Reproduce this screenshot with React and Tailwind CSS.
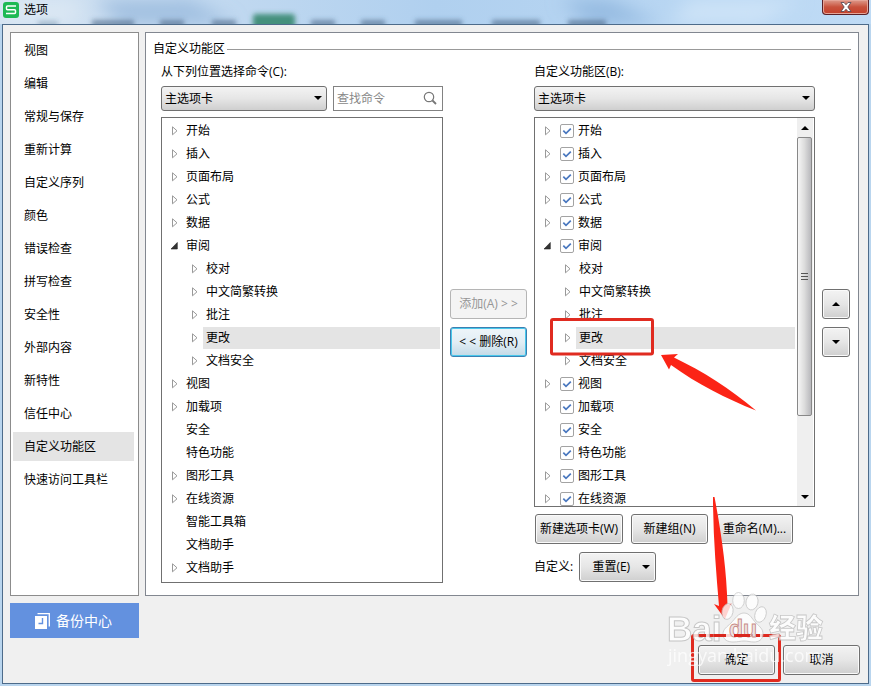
import { useState } from 'react';

const NAV = ['视图', '编辑', '常规与保存', '重新计算', '自定义序列', '颜色', '错误检查', '拼写检查', '安全性', '外部内容', '新特性', '信任中心', '自定义功能区', '快速访问工具栏'];

const REVIEW = ['校对', '中文简繁转换', '批注', '更改', '文档安全'];

const TABS = [
  { name: '开始', arrow: 'closed' },
  { name: '插入', arrow: 'closed' },
  { name: '页面布局', arrow: 'closed' },
  { name: '公式', arrow: 'closed' },
  { name: '数据', arrow: 'closed' },
  { name: '审阅', arrow: 'open' },
  ...REVIEW.map((name) => ({ name, arrow: 'closed', child: true })),
  { name: '视图', arrow: 'closed' },
  { name: '加载项', arrow: 'closed' },
  { name: '安全' },
  { name: '特色功能' },
  { name: '图形工具', arrow: 'closed' },
  { name: '在线资源', arrow: 'closed' },
];

const COMMANDS = [
  ...TABS,
  { name: '智能工具箱' },
  { name: '文档助手' },
  { name: '文档助手', arrow: 'closed' },
];

const BUTTON = 'h-[30px] rounded-[3px] border border-[#707070] bg-linear-to-b from-[#f3f3f3] from-0% via-[#e6e6e6] via-50% to-[#cfcfcf] to-100% text-center whitespace-nowrap shadow-[inset_0_0_0_1px_#fafafa]';
const SELECT = 'w-full h-full appearance-none rounded-[3px] border border-[#707070] bg-linear-to-b from-[#f3f3f3] via-[#e6e6e6] to-[#cfcfcf] pl-[3px] pr-5 outline-none';

function Caret({ up, className = '' }) {
  return (
    <svg viewBox="0 0 8 4" className={`h-1 w-2 ${className}`} aria-hidden="true">
      <path d={up ? 'M0 4 4 0l4 4z' : 'M0 0h8L4 4z'} fill="#000" />
    </svg>
  );
}

function Arrow({ state }) {
  return (
    <svg viewBox="0 0 12 12" className="h-3 w-3 shrink-0" aria-hidden="true">
      {state === 'closed' && <path d="M4.5 1.8v8L9 5.800z" fill="#fff" stroke="#999" />}
      {state === 'open' && <path d="M9.300 2.500v6.500H3z" fill="#333" stroke="#222" strokeWidth="0.600" />}
    </svg>
  );
}

function Dropdown({ id, className }) {
  return (
    <div className={`relative h-[25px] ${className}`}>
      <select id={id} className={SELECT}>
        <option>主选项卡</option>
      </select>
      <Caret className="pointer-events-none absolute top-[10px] right-[5px]" />
    </div>
  );
}

function Check({ name }) {
  return (
    <span className="relative ml-[7px] mr-px h-[14px] w-[14px] shrink-0">
      <input type="checkbox" defaultChecked aria-label={name} className="peer block h-full w-full appearance-none rounded-[2px] border border-[#a3a3a3] bg-white" />
      <svg viewBox="0 0 14 14" className="pointer-events-none absolute inset-0 hidden peer-checked:block" aria-hidden="true">
        <path d="M3.3 6.700 6 9.400l4.800-4.800" fill="none" stroke="#4a78bf" strokeWidth="1.700" />
      </svg>
    </span>
  );
}

function Tree({ label, items, checks }) {
  const [selected, setSelected] = useState(9);
  return (
    <ul role="tree" aria-label={label} className="min-w-0 flex-1 pt-px pr-[2px] pb-[3px]">
      {items.map((item, i) => (
        <li
          key={i}
          role="treeitem"
          aria-selected={selected === i}
          onClick={() => setSelected(i)}
          className={`flex h-[23px] items-center ${item.child ? 'pl-[26px]' : 'pl-[6px]'}`}
        >
          <Arrow state={item.arrow} />
          {checks && !item.child && <Check name={item.name} />}
          <span className={`h-[22px] flex-1 px-[3px] leading-[22px] ${checks && !item.child ? '' : 'ml-[3px]'} ${selected === i ? 'bg-[#e4e4e4]' : ''}`}>
            {item.name}
          </span>
        </li>
      ))}
    </ul>
  );
}

function ScrollBar() {
  return (
    <div className="mr-px flex w-4 shrink-0 flex-col bg-[#efefef]" aria-hidden="true">
      <div className="flex h-[19px] items-center justify-center"><Caret up /></div>
      <div className="flex h-[279px] w-[15px] flex-col items-center justify-center gap-[2px] rounded-[2px] border border-[#888] bg-linear-to-r from-[#f6f6f6] via-[#dcdcdc] to-[#b8b8bc]">
        <i className="h-px w-[7px] bg-[#555]" />
        <i className="h-px w-[7px] bg-[#555]" />
        <i className="h-px w-[7px] bg-[#555]" />
      </div>
      <div className="flex-1" />
      <div className="flex h-[19px] items-center justify-center"><Caret /></div>
    </div>
  );
}

function TitleBar() {
  const words = [[92, 42], [160, 24], [212, 24], [311, 24], [361, 24], [415, 47], [492, 48], [568, 38]];
  return (
    <header className="relative flex h-6 items-start overflow-hidden bg-linear-to-r from-[#d3e2f1] via-[#b0d0ef] to-[#bfdbf5]">
      <svg className="absolute inset-0 h-full w-full" aria-hidden="true">
        <defs>
          <filter id="haze" x="-20%" y="-100%" width="140%" height="300%"><feGaussianBlur stdDeviation="2.800" /></filter>
          <filter id="cloud" x="-50%" y="-100%" width="200%" height="300%"><feGaussianBlur stdDeviation="9" /></filter>
        </defs>
        <g filter="url(#cloud)">
          <path d="M95 0h95l45 24H120z" fill="#8fb2d8" opacity="0.7" />
          <path d="M560 0h50l50 24H590z" fill="#8cb3dc" opacity="0.8" />
          <path d="M0 0h80v24H0z" fill="#e3ecf5" opacity="0.6" />
          <path d="M690 0h110l-40 24h-90z" fill="#d5e8fa" opacity="0.7" />
        </g>
        <g filter="url(#haze)">
          {words.map(([x, w]) => <rect key={x} x={x} y="20" width={w} height="7" fill="#3d5876" opacity="0.55" />)}
          <rect x="38" y="21" width="20" height="6" fill="#3d5876" opacity="0.3" />
          <rect x="253" y="14" width="42" height="16" rx="3" fill="#2f8468" opacity="0.85" />
        </g>
      </svg>
      <svg viewBox="0 0 16 16" className="relative mt-[2px] ml-[3px] h-4 w-4" aria-hidden="true">
        <rect width="16" height="16" rx="3" fill="#1db954" />
        <path d="M13 4H4.500a1 1 0 0 0-1 1v1.800a1 1 0 0 0 1 1h7a1 1 0 0 1 1 1v1.800a1 1 0 0 1-1 1H3" fill="none" stroke="#fff" strokeWidth="1.500" />
      </svg>
      <h1 className="relative ml-[5px] leading-5">选项</h1>
      <button aria-label="关闭" className="relative mr-[2px] ml-auto flex h-[15px] w-[47px] items-center justify-center rounded-b-[4px] border border-t-0 border-[#5a2027] bg-linear-to-b from-[#dd9a8c] via-[#c8513c] to-[#c4402a] shadow-[inset_0_0_0_1px_#e5a598]">
        <svg viewBox="0 0 12 10" className="h-[10px] w-3" aria-hidden="true">
          <path d="M1 .5h3l2 2.300L8 .5h3L7.800 5 11 9.500H8L6 7.200 4 9.500H1L4.200 5z" fill="#fff" stroke="#4d4552" strokeWidth="0.800" />
        </svg>
      </button>
    </header>
  );
}

function Annotations() {
  return (
    <svg viewBox="0 0 871 686" className="pointer-events-none absolute top-0 left-0 h-[686px] w-[871px]" aria-hidden="true">
      <g fill="none" stroke="#e02b20" strokeWidth="3">
        <rect x="551.5" y="319.500" width="101" height="34.500" rx="1.500" />
        <rect x="692.500" y="635.500" width="87" height="45" rx="1.500" />
      </g>
      <g fill="#fb2416">
        <path d="M661 355l17-1-4 3.500c29 14 56 31 82 53-30-12-58-26-85-45.500l-2 4.500z" />
        <path d="M713 497h1.500c7 37 12 72 13 108l4-1.500-6.500 15.500-11-15 5 2c-3-35-6-72-6-109z" />
      </g>
      <g fill="#fff" stroke="#bcbcbc" strokeWidth="0.800" opacity="0.800">
        <ellipse cx="738.500" cy="600.500" rx="5.800" ry="8" />
        <ellipse cx="752" cy="602" rx="6" ry="8" transform="rotate(12 752 602)" />
        <ellipse cx="727.500" cy="611.500" rx="5.500" ry="8" transform="rotate(12 727.5 611.5)" />
        <ellipse cx="760.500" cy="614.500" rx="5.500" ry="8" transform="rotate(20 760.5 614.5)" />
        <path d="M744 613c6 0 8 6 12 10s7 6 7 11c0 6-5 8-9 8-4 0-6-1-10-1s-6 1-11 1-10-2-10-8c0-5 4-7 8-11s7-10 13-10z" />
        <text x="667" y="641" strokeWidth="1" className="font-['Liberation_Sans'] text-[35px] font-bold">Bai</text>
        <text x="769" y="638" className="font-['Noto_Sans_CJK_SC'] text-[27px] font-black">经验</text>
      </g>
      <text x="668" y="662" fill="#fff" opacity="0.750" className="font-['Open_Sans'] text-[18px]">jingyan.baidu.com</text>
      <text x="729" y="637" fill="#eee3e2" stroke="#c98d88" strokeWidth="0.900" className="font-['Liberation_Sans'] text-[23px] font-bold">du</text>
      <path d="M700 635.500h6m8 0h12m8 0h16m6 0h4" stroke="#d9271d" strokeWidth="3" />
    </svg>
  );
}

export default function App() {
  const [page, setPage] = useState('自定义功能区');
  return (
    <div className="relative flex min-h-screen flex-col bg-[#b9d5ee] font-['Open_Sans','Noto_Sans_CJK_SC',sans-serif] text-[12px] leading-4 text-black">
      <TitleBar />
      <div className="mr-[2px] mb-[2px] ml-[2px] flex flex-1 flex-col border border-[#4d6b8a] bg-[#f0f0f0] px-[7px] pt-[7px]">
        <div className="flex gap-[6px]">
          <nav className="flex w-[129px] shrink-0 flex-col gap-1 border border-[#8c8c8c] bg-white pt-[3px] pr-1 pl-[2px]">
            {NAV.map((name) => (
              <button key={name} onClick={() => setPage(name)} className={`h-[29px] shrink-0 pl-[11px] text-left ${page === name ? 'bg-[#e4e4e4]' : ''}`}>
                {name}
              </button>
            ))}
          </nav>
          <main className="mr-[2px] flex-1 border border-[#828790] bg-white px-[7px] pt-2 pb-3">
            <div className="flex items-center gap-[2px]">
              <h2>自定义功能区</h2>
              <div className="h-px flex-1 bg-[#999]" />
            </div>
            <div className="mt-[7px] grid grid-cols-[282fr_77px_281fr_28px] gap-x-[7px] pr-px pl-2">
              <section>
                <label htmlFor="source" className="block">从下列位置选择命令(C):</label>
                <div className="mt-[6px] flex gap-[6px]">
                  <Dropdown id="source" className="flex-1" />
                  <div className="relative h-[25px] w-[110px]">
                    <input type="search" aria-label="查找命令" placeholder="查找命令" className="h-full w-full border border-[#828282] bg-white pr-6 pl-[3px] outline-none placeholder:text-[#888]" />
                    <svg viewBox="0 0 14 14" className="absolute top-[5px] right-[6px] h-[14px] w-[14px]" fill="none" stroke="#777" aria-hidden="true">
                      <circle cx="6" cy="6" r="4.700" strokeWidth="1.200" />
                      <path d="m9.500 9.500 3.500 3.500" strokeWidth="1.800" />
                    </svg>
                  </div>
                </div>
                <div className="mt-[6px] flex border border-[#707070]"><Tree label="命令" items={COMMANDS} /></div>
              </section>
              <div className="flex flex-col gap-2 pt-[225px]">
                <button disabled className="h-[30px] rounded-[3px] border border-[#b5b5b5] bg-[#f4f4f4] whitespace-nowrap text-[#969696]">添加(A) &gt; &gt;</button>
                <button className="h-[30px] rounded-[3px] border border-[#3c7fb1] bg-linear-to-b from-[#eef5f9] via-[#e2eef5] to-[#c3d9e6] whitespace-nowrap shadow-[inset_0_0_0_1px_#48c8ec]">&lt; &lt; 删除(R)</button>
              </div>
              <section>
                <label htmlFor="target" className="block">自定义功能区(B):</label>
                <Dropdown id="target" className="mt-[6px]" />
                <div className="mt-[6px] flex h-[390px] overflow-hidden border border-[#707070]">
                  <Tree label="功能区" items={TABS} checks />
                  <ScrollBar />
                </div>
                <div className="mt-[7px] flex gap-2 pl-px">
                  <button className={`${BUTTON} w-[88px]`}>新建选项卡(W)</button>
                  <button className={`${BUTTON} w-[77px]`}>新建组(N)</button>
                  <button className={`${BUTTON} w-[77px]`}>重命名(M)...</button>
                </div>
                <div className="mt-2 flex items-center gap-[6px]">
                  <span>自定义:</span>
                  <button className={`${BUTTON} flex w-[77px] items-center justify-end gap-3 pr-[5px]`}>重置(E)<Caret /></button>
                </div>
              </section>
              <div className="flex flex-col gap-2 pt-[225px]">
                <button aria-label="上移" className={`${BUTTON} flex items-center justify-center`}><Caret up /></button>
                <button aria-label="下移" className={`${BUTTON} flex items-center justify-center`}><Caret /></button>
              </div>
            </div>
          </main>
        </div>
        <footer className="mt-[7px] flex items-start justify-between pr-px">
          <button className="flex h-[35px] w-[129px] items-center justify-center gap-[6px] bg-[#6391df] pr-[2px] text-[14px] text-white">
            <svg viewBox="0 0 15 16" className="h-4 w-[15px]" aria-hidden="true">
              <path d="M2.500.7h11.800v12.800" fill="none" stroke="#fff" strokeWidth="1.300" />
              <path d="M0 3h12v13H0z" fill="#fff" />
              <path d="M7.500 5v5.500H3.500" fill="none" stroke="#6391df" strokeWidth="1.400" />
            </svg>
            备份中心
          </button>
          <div className="mt-[42px] flex gap-2 pb-2">
            <button className={`${BUTTON} w-[77px]`}>确定</button>
            <button className={`${BUTTON} w-[77px]`}>取消</button>
          </div>
        </footer>
      </div>
      <Annotations />
    </div>
  );
}
